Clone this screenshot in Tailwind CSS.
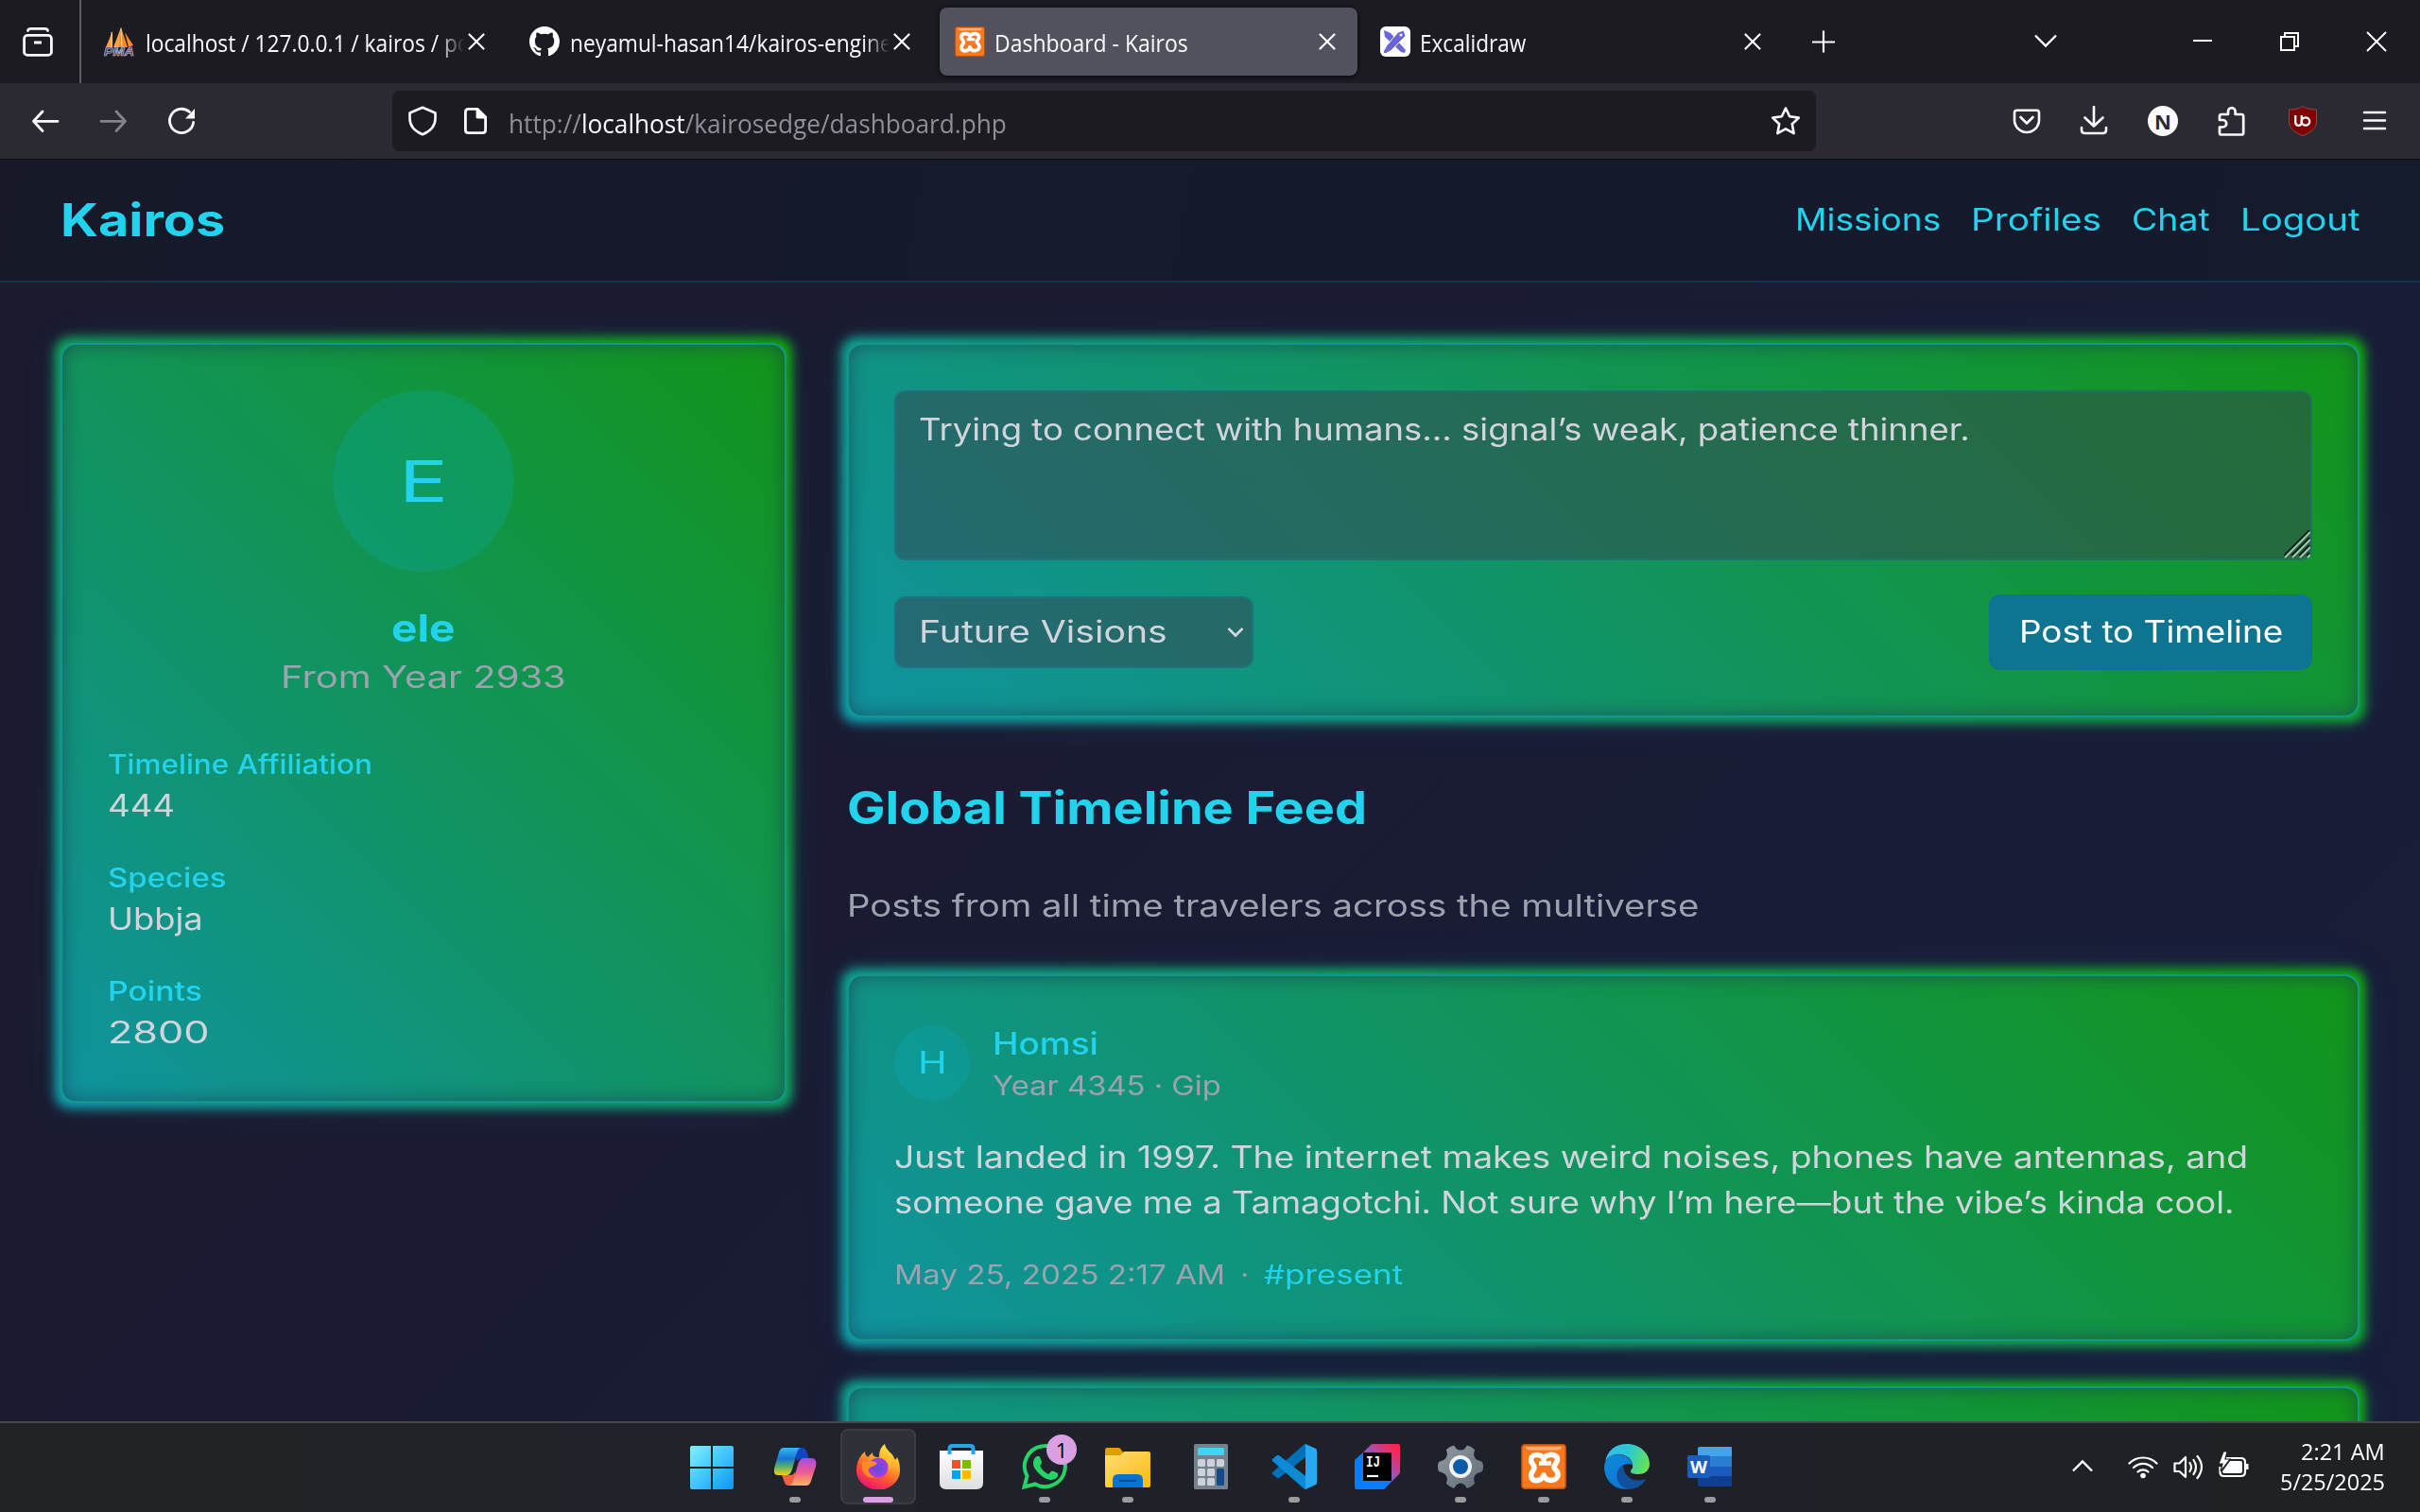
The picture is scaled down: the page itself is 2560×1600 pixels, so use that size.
<!DOCTYPE html>
<html lang="en">
<head>
<meta charset="utf-8">
<title>Dashboard - Kairos</title>
<script src="https://cdn.jsdelivr.net/npm/@tailwindcss/browser@4"></script>
</head>
<body class="w-[2560px] h-[1600px] overflow-hidden flex flex-col bg-[#1a1a2e] font-['Open_Sans','Noto_Sans',sans-serif]">

<svg class="hidden">
  <defs>
    <symbol id="xampp" viewBox="0 0 48 48">
      <rect x=".8" y=".8" width="46.4" height="46.4" rx="3" fill="#f87820" stroke="#b9500f" stroke-width="1.4"/>
      <path d="M5 3h38c0 2-3 3.500-6 3.500H11C8 6.500 5 5 5 3z" fill="#ffb27c"/>
      <path d="M24 16C22.500 10 10.500 9.500 10.500 17c0 3.500 3.500 5 3.500 8s-3.500 4.500-3.500 8.500C10.500 40.500 22 40.500 24 33c2 7.500 15 7 15-1 0-4-4-5-4-7.500s3.500-4.500 3.500-8C38.500 9.500 26 10 24 16z" fill="none" stroke="#fff" stroke-width="5.600" stroke-linejoin="round"/>
      <path d="M24 14v4.500M24 36v-5M19 20.500h13" stroke="#fff" stroke-width="4.500"/>
    </symbol>
    <symbol id="x" viewBox="0 0 18 18"><path d="M1.500 1.500l15 15M16.500 1.500l-15 15" stroke="#fbfbfe" stroke-width="2.200" fill="none" stroke-linecap="round"/></symbol>
  </defs>
</svg>

<!-- Tab strip -->
<div class="h-[88px] shrink-0 bg-[#1c1b22] flex items-center text-[#fbfbfe] text-[25px]">
  <div class="w-[86px] h-full border-r-2 border-[#5b5b63] flex items-center pl-6">
    <svg class="w-8 h-8" viewBox="0 0 32 32" fill="none" stroke="#fbfbfe" stroke-width="2.800"><rect x="1.600" y="9.400" width="28.800" height="21" rx="3.500"/><path d="M5.500 4.500Q6 2.400 8.500 2.400h15Q26 2.400 26.500 4.500" stroke-linecap="round"/><path d="M12 17h8" stroke-width="3"/></svg>
  </div>
  <div class="flex gap-2 pl-2">
    <div class="w-[442px] h-[72px] flex items-center px-4">
      <svg class="w-8 h-8 shrink-0" viewBox="0 0 32 32"><path d="M9 5l-7 17h7zM18 1L10 22h11z" fill="#f9a13a"/><path d="M18 1l-2 21h9zM22 6l9 14-5 2z" fill="#f58a1f"/><path d="M8 6v15M18 2l1 19" stroke="#fbd39a" stroke-width="1"/><text x="0" y="31" font-size="12.500" font-weight="700" font-style="italic" font-family="Liberation Sans" textLength="32" lengthAdjust="spacingAndGlyphs" fill="#34367a" stroke="#c9c9dc" stroke-width=".6">PMA</text></svg>
      <div class="ml-3 w-[337px] pt-1 shrink-0 overflow-hidden whitespace-nowrap mask-r-from-92%"><span class="fit" data-w="344">localhost / 127.0.0.1 / kairos / po</span></div>
      <svg class="w-[18px] h-[18px] ml-1 shrink-0"><use href="#x"/></svg>
    </div>
    <div class="w-[442px] h-[72px] flex items-center px-4">
      <svg class="w-8 h-8 shrink-0" viewBox="0 0 16 16" fill="#fff"><path d="M8 0C3.580 0 0 3.580 0 8c0 3.540 2.290 6.530 5.470 7.590.4.070.55-.17.55-.38 0-.19-.01-.82-.01-1.490-2.010.37-2.530-.49-2.690-.94-.09-.23-.48-.94-.82-1.130-.28-.15-.68-.52-.01-.53.63-.01 1.080.58 1.230.82.72 1.210 1.870.87 2.330.66.07-.52.28-.87.51-1.070-1.780-.2-3.640-.89-3.640-3.950 0-.87.31-1.590.82-2.150-.08-.2-.36-1.020.08-2.120 0 0 .67-.21 2.200.82.64-.18 1.320-.27 2-.27s1.360.09 2 .27c1.530-1.040 2.200-.82 2.200-.82.44 1.100.16 1.920.08 2.120.51.56.82 1.270.82 2.150 0 3.070-1.870 3.750-3.650 3.950.29.25.54.73.54 1.480 0 1.070-.01 1.930-.01 2.200 0 .21.15.46.55.38A8.010 8.010 0 0016 8c0-4.420-3.580-8-8-8z"/></svg>
      <div class="ml-[11px] w-[338px] pt-1 shrink-0 overflow-hidden whitespace-nowrap mask-r-from-92%"><span class="fit" data-w="348">neyamul-hasan14/kairos-engine-</span></div>
      <svg class="w-[18px] h-[18px] ml-1 shrink-0"><use href="#x"/></svg>
    </div>
    <div class="w-[442px] h-[72px] flex items-center px-4 rounded-lg bg-[#52525e] shadow-[0_1px_5px_rgba(0,0,0,0.8)]">
      <svg class="w-8 h-8 shrink-0"><use href="#xampp"/></svg>
      <div class="ml-[10px] w-[339px] pt-1 shrink-0 whitespace-nowrap"><span class="fit" data-w="205">Dashboard - Kairos</span></div>
      <svg class="w-[18px] h-[18px] ml-1 shrink-0"><use href="#x"/></svg>
    </div>
    <div class="w-[442px] h-[72px] flex items-center px-4">
      <svg class="w-8 h-8 shrink-0" viewBox="0 0 32 32"><rect width="32" height="32" rx="6" fill="#fff"/><path d="M4 4l7 3 16 18-1 3-4-1L5 11z" fill="#6965db"/><path d="M25 4l2 6L11 26l-6 3-2-2 4-7L19 6z" fill="#6965db" stroke="#fff" stroke-width="1"/><circle cx="22" cy="9" r="1.500" fill="#fff"/></svg>
      <div class="ml-[10px] w-[339px] pt-1 shrink-0 whitespace-nowrap"><span class="fit" data-w="112">Excalidraw</span></div>
      <svg class="w-[18px] h-[18px] ml-1 shrink-0"><use href="#x"/></svg>
    </div>
  </div>
  <svg class="w-6 h-6 ml-[31px]" viewBox="0 0 24 24" stroke="#fbfbfe" stroke-width="2.200"><path d="M12 .5v23M0 12.500h24"/></svg>
  <svg class="w-6 h-6 ml-[211px]" viewBox="0 0 24 24" fill="none" stroke="#fbfbfe" stroke-width="2.400"><path d="M1 5.500l11 11 11-11"/></svg>
  <svg class="w-5 h-6 ml-[144px]" viewBox="0 0 20 24" stroke="#fff" stroke-width="2"><path d="M0 11h20"/></svg>
  <svg class="w-5 h-5 ml-[72px]" viewBox="0 0 20 20" fill="none" stroke="#fff" stroke-width="2"><path d="M1 5h14v14H1z"/><path d="M5 5V1h14v14h-4"/></svg>
  <svg class="w-[22px] h-[22px] ml-[71px]" viewBox="0 0 22 22" stroke="#fff" stroke-width="1.900"><path d="M1 1l20 20M21 1L1 21"/></svg>
</div>

<!-- Toolbar -->
<div class="h-[81px] shrink-0 bg-[#2b2a33] border-b border-[#0c0c0d] flex items-center pl-8">
  <div class="flex gap-10">
    <svg class="w-8 h-8" viewBox="0 0 32 32" fill="none" stroke="#fbfbfe" stroke-width="2.800" stroke-linecap="round" stroke-linejoin="round"><path d="M13 6L3.500 16.300 13 26.500M4 16.300h25"/></svg>
    <svg class="w-8 h-8" viewBox="0 0 32 32" fill="none" stroke="#85848c" stroke-width="2.800" stroke-linecap="round" stroke-linejoin="round"><path d="M19 6l9.500 10.300L19 26.500M28 16.300H3"/></svg>
    <svg class="w-8 h-8" viewBox="0 0 32 32" fill="none" stroke="#fbfbfe" stroke-width="2.800"><path d="M28.600 17.500A12.600 12.600 0 1 1 24.500 6.500" stroke-linecap="round"/><path d="M30 3v10.500H20z" fill="#fbfbfe" stroke="none"/></svg>
  </div>
  <div class="ml-[207px] w-[1506px] h-16 rounded-lg bg-[#1c1b22] flex items-center justify-between px-4">
    <div class="flex items-center">
      <svg class="w-8 h-8" viewBox="0 0 32 32" fill="none" stroke="#fbfbfe" stroke-width="2.600" stroke-linejoin="round"><path d="M16 1.800L29.500 7.500v6C29.500 21 25 26.500 16 30.300 7 26.500 2.500 21 2.500 13.500v-6z"/></svg>
      <svg class="w-8 h-8 ml-6" viewBox="0 0 32 32" fill="none" stroke="#fbfbfe" stroke-width="2.800" stroke-linejoin="round"><path d="M18 3.400H8.500Q5.400 3.400 5.400 6.500v19Q5.400 28.600 8.500 28.600h15Q26.600 28.600 26.600 25.500V12z"/><path d="M18 3.400V12h8.600z" fill="#fbfbfe"/></svg>
      <div class="ml-[19px] text-[28px] leading-10 text-[#8f8f98] whitespace-nowrap pt-1"><span class="fit" data-w="527">http://<span class="text-[#fbfbfe]">localhost</span>/kairosedge/dashboard.php</span></div>
    </div>
    <svg class="w-8 h-8 shrink-0" viewBox="0 0 32 32" fill="none" stroke="#fbfbfe" stroke-width="2.600" stroke-linejoin="round"><path d="M16 2.500l4.200 8.800 9.600 1.300-7 6.700 1.800 9.800L16 24.400l-8.600 4.700 1.800-9.800-7-6.700 9.600-1.300z"/></svg>
  </div>
  <div class="ml-[207px] flex items-center">
    <svg class="w-8 h-8" viewBox="0 0 32 32" fill="none" stroke="#fbfbfe" stroke-width="2.600" stroke-linecap="round" stroke-linejoin="round"><path d="M5.500 4.800h21Q29 4.800 29 7.300V15a13 13 0 0 1-26 0V7.300Q3 4.800 5.500 4.800z"/><path d="M9.500 12l6.500 6.500 6.500-6.500"/></svg>
    <svg class="w-8 h-8 ml-[39px]" viewBox="0 0 32 32" fill="none" stroke="#fbfbfe" stroke-width="2.600" stroke-linecap="round" stroke-linejoin="round"><path d="M16 1v20M6.500 12.500L16 21.500l9.500-9M3 23v2.500Q3 29 6.500 29h19Q29 29 29 25.500V23"/></svg>
    <div class="w-8 h-8 ml-[41px] rounded-full bg-[#fbfbfe] flex items-center justify-center text-[22px] font-bold text-[#2b2a33] leading-none">N</div>
    <svg class="w-8 h-8 ml-[40px]" viewBox="0 0 32 32" fill="none" stroke="#fbfbfe" stroke-width="2.700" stroke-linejoin="round"><path d="M6 30.500Q4 30.500 4 28.500v-6h3.500a3.700 3.700 0 0 0 0-7.500H4V11Q4 9 6 9h7V6a3.800 3.800 0 0 1 7.600 0v3h6.500Q29.200 9 29.200 11v17.500q0 2-2 2z"/></svg>
    <div class="w-8 h-8 ml-11 relative flex items-center justify-center">
      <svg class="absolute inset-0" viewBox="0 0 32 32"><path d="M16 .5C20 3 25 4 30.500 4v13C30.500 24 24 28.500 16 31.700 8 28.500 1.500 24 1.500 17V4C7 4 12 3 16 .5z" fill="#800000" stroke="#8c5a5e" stroke-width=".8"/></svg>
      <svg class="relative w-5 h-5" viewBox="0 0 20 20" fill="none" stroke="#fff" stroke-width="2.300"><path d="M2.200 4v7.500a3.300 3.300 0 0 0 6.600 0V4"/><circle cx="13" cy="10.500" r="4.200"/></svg>
    </div>
    <svg class="w-8 h-8 ml-11" viewBox="0 0 32 32" stroke="#fbfbfe" stroke-width="2.500" stroke-linecap="round"><path d="M5 7h22M5 15.500h22M5 24h22"/></svg>
  </div>
</div>

<!-- Kairos page -->
<div class="flex-1 min-h-0 overflow-hidden flex flex-col bg-[linear-gradient(135deg,#1b1a2e_0%,#1a1b33_45%,#181e3a_100%)] font-[Inter,sans-serif] text-[32px] leading-[48px]">
  <nav class="h-[130px] shrink-0 px-16 border-b-2 border-[#11364a] bg-[linear-gradient(100deg,#171929_0%,#151a2c_40%,#141b2d_100%)] flex items-center justify-between text-[#22d3ee]">
    <div class="text-[48px] leading-[64px] font-bold"><span class="fit" data-w="174">Kairos</span></div>
    <div class="flex gap-8 whitespace-nowrap">
      <a><span class="fit" data-w="154">Missions</span></a>
      <a><span class="fit" data-w="138">Profiles</span></a>
      <a><span class="fit" data-w="83">Chat</span></a>
      <a><span class="fit" data-w="126">Logout</span></a>
    </div>
  </nav>

  <main class="p-16 grid grid-cols-[768px_1600px] gap-16 items-start">
    <aside class="relative isolate p-12 rounded-2xl border-2 border-[#12958a] shadow-[0_0_48px_rgba(34,211,238,0.1)]">
      <div class="absolute -inset-[8px] -z-10 rounded-2xl blur-[6px] bg-[linear-gradient(45deg,#0fa5b5,#0fae12)]"></div>
      <div class="absolute -inset-0.5 -z-10 rounded-2xl border-2 border-[#12958a] bg-[linear-gradient(45deg,#10939f,#129519)] shadow-[inset_0_0_20px_rgba(30,50,75,0.6)]"></div>
      <div class="flex flex-col items-center">
        <div class="w-48 h-48 rounded-full bg-[#06b6d4]/20 flex items-center justify-center text-[60px] leading-none text-[#22d3ee]"><span class="fit" data-w="52">E</span></div>
        <div class="mt-8 text-[40px] leading-[56px] font-bold text-[#22d3ee]"><span class="fit" data-w="68">ele</span></div>
        <div class="text-[#9ca3af]"><span class="fit" data-w="302">From Year 2933</span></div>
      </div>
      <dl class="mt-12 flex flex-col gap-8 text-[#d1d5db]">
        <div><dt class="text-[28px] leading-10 font-medium text-[#22d3ee]"><span class="fit" data-w="280">Timeline Affiliation</span></dt><dd><span class="fit" data-w="71">444</span></dd></div>
        <div><dt class="text-[28px] leading-10 font-medium text-[#22d3ee]"><span class="fit" data-w="126">Species</span></dt><dd><span class="fit" data-w="101">Ubbja</span></dd></div>
        <div><dt class="text-[28px] leading-10 font-medium text-[#22d3ee]"><span class="fit" data-w="100">Points</span></dt><dd><span class="fit" data-w="108">2800</span></dd></div>
      </dl>
    </aside>

    <section>
      <div class="relative isolate p-12 rounded-2xl border-2 border-[#12958a] shadow-[0_0_48px_rgba(34,211,238,0.1)]">
        <div class="absolute -inset-[8px] -z-10 rounded-2xl blur-[6px] bg-[linear-gradient(45deg,#0fa5b5,#0fae12)]"></div>
        <div class="absolute -inset-0.5 -z-10 rounded-2xl border-2 border-[#12958a] bg-[linear-gradient(45deg,#10939f,#129519)] shadow-[inset_0_0_20px_rgba(30,50,75,0.6)]"></div>
        <div class="relative h-[180px] rounded-xl border-2 border-[#0891b2]/25 bg-[#374151]/50 px-6 py-4 text-[#d1d5db]">
          <span class="fit" data-w="1112">Trying to connect with humans... signal’s weak, patience thinner.</span>
          <svg class="absolute right-0 bottom-0 w-7 h-[30px]" viewBox="0 0 28 30" stroke-width="1.900"><path d="M0 27L27 0M8 27L27 8M16 27L27 16M24 27l3-3" stroke="#0b1f17"/><path d="M1 29L28 2M9 29L28 10M17 29L28 18M25 29l3-3" stroke="#a9c3b4"/></svg>
        </div>
        <div class="mt-9 flex items-center justify-between">
          <div class="w-[380px] h-[76px] rounded-xl border-2 border-[#0891b2]/25 bg-[#374151]/50 pl-6 pr-2 flex items-center justify-between text-[#d1d5db]">
            <span class="fit" data-w="263">Future Visions</span>
            <svg class="w-[18px] h-[12px]" viewBox="0 0 18 12" fill="none" stroke="#d1d5db" stroke-width="2.800"><path d="M1.500 2l7.500 7.500L16.500 2"/></svg>
          </div>
          <div class="w-[342px] h-20 rounded-xl bg-[#0e7490] px-8 flex items-center text-white whitespace-nowrap"><span class="fit" data-w="279">Post to Timeline</span></div>
        </div>
      </div>

      <h2 class="mt-16 text-[48px] leading-[64px] font-bold text-[#22d3ee]"><span class="fit" data-w="550">Global Timeline Feed</span></h2>
      <p class="mt-12 text-[#9ca3af]"><span class="fit" data-w="902">Posts from all time travelers across the multiverse</span></p>

      <article class="relative isolate mt-12 p-12 rounded-2xl border-2 border-[#12958a] shadow-[0_0_48px_rgba(34,211,238,0.1)]">
        <div class="absolute -inset-[8px] -z-10 rounded-2xl blur-[6px] bg-[linear-gradient(45deg,#0fa5b5,#0fae12)]"></div>
        <div class="absolute -inset-0.5 -z-10 rounded-2xl border-2 border-[#12958a] bg-[linear-gradient(45deg,#10939f,#129519)] shadow-[inset_0_0_20px_rgba(30,50,75,0.6)]"></div>
        <div class="flex items-center gap-6">
          <div class="w-20 h-20 rounded-full bg-[#06b6d4]/20 flex items-center justify-center text-[#22d3ee]"><span class="fit" data-w="31">H</span></div>
          <div>
            <div class="font-medium text-[#22d3ee]"><span class="fit" data-w="112">Homsi</span></div>
            <div class="text-[28px] leading-10 text-[#9ca3af]"><span class="fit" data-w="242">Year 4345 · Gip</span></div>
          </div>
        </div>
        <div class="mt-8 text-[#d1d5db] whitespace-nowrap">
          <div><span class="fit" data-w="1432">Just landed in 1997. The internet makes weird noises, phones have antennas, and</span></div>
          <div><span class="fit" data-w="1418">someone gave me a Tamagotchi. Not sure why I’m here—but the vibe’s kinda cool.</span></div>
        </div>
        <div class="mt-8 text-[28px] leading-10 text-[#9ca3af] flex">
          <span class="fit" data-w="350">May 25, 2025 2:17 AM</span><span class="w-[41px] text-center">·</span><span class="text-[#22d3ee]"><span class="fit" data-w="147">#present</span></span>
        </div>
      </article>

      <article class="relative isolate mt-12 h-[388px] rounded-2xl border-2 border-[#12958a] shadow-[0_0_48px_rgba(34,211,238,0.1)]">
        <div class="absolute -inset-[8px] -z-10 rounded-2xl blur-[6px] bg-[linear-gradient(45deg,#0fa5b5,#0fae12)]"></div>
        <div class="absolute -inset-0.5 -z-10 rounded-2xl border-2 border-[#12958a] bg-[linear-gradient(45deg,#10939f,#129519)] shadow-[inset_0_0_20px_rgba(30,50,75,0.6)]"></div>
      </article>
    </section>
  </main>
</div>

<!-- Taskbar -->
<div class="relative h-24 shrink-0 border-t-2 border-[#46474b] bg-[linear-gradient(90deg,#212224_0%,#1f2229_30%,#1e2129_60%,#202124_100%)] flex items-start pl-[709px] pt-1.5 text-white">
  <div class="flex">
    <div class="w-[88px] flex flex-col items-center pt-4"><svg class="w-12 h-12" viewBox="0 0 48 48"><defs><linearGradient id="w" x1="0" y1="0" x2="1" y2="1" ><stop offset="0" stop-color="#7df3fd"/><stop offset="1" stop-color="#0a96f8"/></linearGradient></defs><path d="M3 2h20v22H1V4q0-2 2-2zM25 2h20q2 0 2 2v20H25zM1 26h22v22H3q-2 0-2-2zM25 26h22v20q0 2-2 2H25z" fill="url(#w)"/></svg></div>
    <div class="w-[88px] flex flex-col items-center pt-4"><svg class="w-12 h-12" viewBox="0 0 48 48"><defs><linearGradient id="c1" x1="0" y1="0" x2="0" y2="1"><stop offset="0" stop-color="#35b8f5"/><stop offset=".4" stop-color="#1675d6"/><stop offset=".65" stop-color="#4bab72"/><stop offset="1" stop-color="#f3cf17"/></linearGradient><linearGradient id="c2" x1="0" y1="0" x2="0" y2="1"><stop offset="0" stop-color="#a94bea"/><stop offset=".5" stop-color="#ec5a91"/><stop offset="1" stop-color="#ffb45a"/></linearGradient></defs><path d="M24 4h8q3 0 4 3l3 9h-9q-3 0-4 3z" fill="#1245c0"/><path d="M24 44h-7q-3 0-4-3l-3-8h9q4 0 5-4z" fill="#f4603f"/><path d="M12 4h18q-3 1-4 5l-5 18q-2 6-6 6H6q-6 0-3.500-9L7 9q1.500-5 5-5z" fill="url(#c1)"/><path d="M36 44H18q3-1 4-5l5-17q2-7 6-7h8q7 0 5 9l-5 15q-1.500 5-5 5z" fill="url(#c2)"/></svg><div class="w-3 h-1.5 mt-2 rounded-full bg-[#9b9b9e]"></div></div>
    <div class="w-[88px] flex justify-center"><div class="w-20 h-20 rounded-lg bg-white/7 border-2 border-white/6 flex flex-col items-center pt-3.5"><svg class="w-12 h-12 shrink-0" viewBox="0 0 48 48"><defs><linearGradient id="f" x1=".8" y1="0" x2=".3" y2="1"><stop offset="0" stop-color="#fff044"/><stop offset=".35" stop-color="#ffb02a"/><stop offset=".65" stop-color="#ff5a2e"/><stop offset="1" stop-color="#ec0f75"/></linearGradient><radialGradient id="fp"><stop offset="0" stop-color="#5f4ed8"/><stop offset="1" stop-color="#a63ae6"/></radialGradient></defs><path d="M31 0c1 7 8 9 10 15 1 3 1 2 3-1 3 6 3 11 3 15A23 20 0 0 1 1 28C1 20 4 13 10 8c0 3 1 4 3 6l5-5c0 4 2 5 7 5 0-7 2-11 6-14z" fill="url(#f)"/><circle cx="24" cy="25" r="10.500" fill="url(#fp)"/><path d="M7 20c5-2 9-3 16 0-2 4-6 3-9 6-2 3 2 9 8 9-9 3-16-3-15-15z" fill="#ff8a26"/><path d="M25 14c8 0 13 7 10 14 5-7 3-14-3-18z" fill="#ffbf2e"/></svg><div class="w-8 h-1.5 mt-2 rounded-full bg-[#dba0e4]"></div></div></div>
    <div class="w-[88px] flex flex-col items-center pt-4"><svg class="w-12 h-12" viewBox="0 0 48 48"><defs><linearGradient id="s" x1="0" y1="0" x2="0" y2="1"><stop offset="0" stop-color="#fff"/><stop offset="1" stop-color="#dedee0"/></linearGradient></defs><path d="M1 7h46v34q0 7-7 7H8q-7 0-7-7z" fill="url(#s)"/><path d="M11.500 11V5q0-3 3-3h19q3 0 3 3v6" fill="none" stroke="#22a7ea" stroke-width="4"/><path d="M14 17h9v9h-9z" fill="#f25022"/><path d="M25 17h9v9h-9z" fill="#7fba00"/><path d="M14 28h9v9h-9z" fill="#00a4ef"/><path d="M25 28h9v9h-9z" fill="#ffb900"/></svg></div>
    <div class="w-[88px] relative flex flex-col items-center pt-4"><svg class="w-12 h-12" viewBox="0 0 48 48"><path d="M2.500 45.500L5.500 34A21.500 21.500 0 1 1 14 42.500z" fill="none" stroke="#25d366" stroke-width="4"/><path d="M16 13q2-1 3 1l2 5q0 2-2 4 3 6 9 9l3-3q1-1 3 0l4 2q1 4-3 6-6 3-14-3-10-8-9-15 1-5 4-6z" fill="#25d366"/></svg><div class="w-3 h-1.5 mt-2 rounded-full bg-[#9b9b9e]"></div><div class="absolute left-[46px] top-1.5 w-8 h-8 rounded-full bg-[#dba0e4] text-black text-[22px] leading-8 text-center">1</div></div>
    <div class="w-[88px] flex flex-col items-center pt-4"><svg class="w-12 h-12" viewBox="0 0 48 48"><defs><linearGradient id="e" x1="0" y1="0" x2="1" y2="1"><stop offset="0" stop-color="#ffdf75"/><stop offset="1" stop-color="#fbb90d"/></linearGradient></defs><path d="M0 6q0-2 2-2h12q2 0 3 2l4 6-4 5H0z" fill="#e0a000"/><path d="M0 12h16l4-4h26q2 0 2 2v34q0 2-2 2H2q-2 0-2-2z" fill="url(#e)"/><path d="M8 46V38q0-6 6-6h20q6 0 6 6v8z" fill="#0a72cc"/><path d="M15 39h18" stroke="#054b94" stroke-width="2"/></svg><div class="w-3 h-1.5 mt-2 rounded-full bg-[#9b9b9e]"></div></div>
    <div class="w-[88px] flex flex-col items-center pt-4"><svg class="w-12 h-12" viewBox="0 0 48 48"><rect x="6" width="36" height="48" rx="1.500" fill="#77818b"/><rect x="10" y="4" width="28" height="8" rx="1.500" fill="#41d5f5"/><g fill="#cbd2da"><rect x="10" y="16" width="8" height="8" rx="1.500"/><rect x="20" y="16" width="8" height="8" rx="1.500"/><rect x="30" y="16" width="8" height="8" rx="1.500"/><rect x="10" y="26" width="8" height="8" rx="1.500"/><rect x="20" y="26" width="8" height="8" rx="1.500"/><rect x="10" y="36" width="8" height="8" rx="1.500"/><rect x="20" y="36" width="8" height="8" rx="1.500"/></g><rect x="30" y="26" width="8" height="18" rx="1.500" fill="#144a8c"/></svg></div>
    <div class="w-[88px] flex flex-col items-center pt-4"><svg class="w-12 h-12" viewBox="0 0 48 48"><path d="M1 32l5 4q1 .6 2 0L36 14V0q-1 0-2 1L1 30q-1 1 0 2z" fill="#0070b8"/><path d="M1 16l5-4q1-.6 2 0L36 34v14q-1 0-2-1L1 18q-1-1 0-2z" fill="#0d8ad6"/><path d="M36 0l11 5q1 .6 1 2v34q0 1.400-1 2l-11 5z" fill="#27a8f2"/></svg><div class="w-3 h-1.5 mt-2 rounded-full bg-[#9b9b9e]"></div></div>
    <div class="w-[88px] flex flex-col items-center pt-4"><svg class="w-12 h-12" viewBox="0 0 48 48"><defs><linearGradient id="ij" x1=".9" y1=".1" x2=".3" y2=".8"><stop offset="0" stop-color="#ff2450"/><stop offset=".55" stop-color="#9a55b5"/><stop offset="1" stop-color="#087cfa"/></linearGradient></defs><path d="M8 10L17 1q1-1 2-1h27q2 0 2 2v28q0 1-1 2L31 48 20 40z" fill="url(#ij)"/><path d="M0 18q0-1 1-2L9 9v30h30L31 48H2q-2 0-2-2z" fill="#087cfa"/><path d="M9 9h30v30H9z"/><text x="12" y="24" font-size="16" font-weight="700" font-family="Liberation Mono" textLength="15" lengthAdjust="spacingAndGlyphs" fill="#fff">IJ</text><path d="M13 34h12" stroke="#fff" stroke-width="2.200"/></svg></div>
    <div class="w-[88px] flex flex-col items-center pt-4"><svg class="w-12 h-12" viewBox="0 0 48 48"><defs><linearGradient id="g" x1="0" y1="0" x2="1" y2="1"><stop offset="0" stop-color="#939ba3"/><stop offset="1" stop-color="#5f6b77"/></linearGradient></defs><path d="M17 1.500l3 4q4 2 8 0l3-4q4 .5 8 4.500l-1 5q1 5 4 6l5 2q2 5 0 10l-5 2q-3 1-4 6l1 5q-4 4-8 5l-3-4q-4-3-8 0l-3 4q-4-1-8-5l1-5q-1-5-4-6l-5-2q-2-5 0-10l5-2q3-1 4-6L9 6q4-4 8-4.500z" fill="url(#g)"/><circle cx="24" cy="24" r="10" fill="#0c5cab" stroke="#f2f2f2" stroke-width="4"/></svg><div class="w-3 h-1.5 mt-2 rounded-full bg-[#9b9b9e]"></div></div>
    <div class="w-[88px] flex flex-col items-center pt-4"><svg class="w-12 h-12"><use href="#xampp"/></svg><div class="w-3 h-1.5 mt-2 rounded-full bg-[#9b9b9e]"></div></div>
    <div class="w-[88px] flex flex-col items-center pt-4"><svg class="w-12 h-12" viewBox="0 0 48 48"><defs><linearGradient id="e1" x1="0" y1=".3" x2="1" y2=".6"><stop offset="0" stop-color="#35b9f4"/><stop offset=".5" stop-color="#2fc9cd"/><stop offset="1" stop-color="#68e34e"/></linearGradient><linearGradient id="e2" x1="0" y1="0" x2=".5" y2="1"><stop offset="0" stop-color="#1389da"/><stop offset="1" stop-color="#0a76d2"/></linearGradient></defs><path d="M1 19C3 7 12 0 24 0c14 0 24 10 24 21 0 8-6 11-12 11-5 0-8-1-8-3s3-3 2-7C29 14 20 10 13 11 6 12 2 16 1 19z" fill="url(#e1)"/><path d="M0 24C1 15 7 11 14 11c8 0 15 5 16 11-10-4-18 6-15 14 2 6 7 10 14 11C12 51 0 39 0 24z" fill="url(#e2)"/><path d="M20 22c-8 5-9 17-1 23 9 6 21 1 25-8-12 5-24-2-24-15z" fill="#11509c"/></svg><div class="w-3 h-1.5 mt-2 rounded-full bg-[#9b9b9e]"></div></div>
    <div class="w-[88px] flex flex-col items-center pt-4"><svg class="w-12 h-12" viewBox="0 0 48 48"><path d="M11 5q0-2 2-2h33q1 0 1 1v9H11z" fill="#41a5ee"/><path d="M11 13h36v11H11z" fill="#2b7cd3"/><path d="M11 24h36v10H11z" fill="#185abd"/><path d="M11 34h36v10q0 1-1 1H13q-2 0-2-2z" fill="#103f91"/><rect y="12" width="24" height="24" rx="2" fill="#1b5cc0"/><text x="3" y="30.500" font-size="17" font-weight="700" font-family="Open Sans" textLength="18" lengthAdjust="spacingAndGlyphs" fill="#fff">W</text></svg><div class="w-3 h-1.5 mt-2 rounded-full bg-[#9b9b9e]"></div></div>
  </div>
  <div class="flex ml-[338px] pt-6">
    <svg class="w-6 h-8" viewBox="0 0 24 32" fill="none" stroke="#fff" stroke-width="2.400"><path d="M2 20.500L12 10.500l10 10"/></svg>
    <svg class="w-8 h-8 ml-9" viewBox="0 0 32 32" fill="none" stroke="#fff" stroke-width="2.200" stroke-linecap="round"><path d="M1.500 12.500a20.500 20.500 0 0 1 29 0M6 17a14 14 0 0 1 20 0M10.500 21.500a8 8 0 0 1 11 0"/><circle cx="16" cy="25.500" r="2.800" fill="#fff" stroke="none"/></svg>
    <svg class="w-8 h-8 ml-4" viewBox="0 0 32 32" fill="none" stroke="#fff" stroke-width="2.200" stroke-linecap="round" stroke-linejoin="round"><path d="M1.500 12.500h5L13 6v21l-6.500-6h-5zM17.500 12q3 4.500 0 9M21.500 9q5 7.500 0 15M25.500 5q9 11 0 23"/></svg>
    <svg class="w-8 h-8 ml-4" viewBox="0 0 32 32"><path d="M8 7h15.500Q28 7 28 11v10.500Q28 26 23.500 26h-18Q1.500 26 1.500 22v-6" fill="none" stroke="#fff" stroke-width="2.200"/><path d="M12 10h11q2 0 2 2v9q0 2-2 2H6q-2 0-2-2z" fill="#fff"/><path d="M28 13h3.500v6H28z" fill="#fff"/><path d="M5 0L0 13h4L2 21 12 8H7l2-8z" fill="#fff" stroke="#202226" stroke-width="1.200"/></svg>
  </div>
  <div class="ml-8 pt-2 w-[112px] flex flex-col items-end text-[23px] leading-8 whitespace-nowrap"><span class="fit" data-w="89">2:21 AM</span><span class="fit" data-w="111">5/25/2025</span></div>
</div>

<script>
  // Stretch each label horizontally to its design width, again whenever its own size changes
  function fit(el) {
    var natural = el.offsetWidth;
    if (!natural) return;
    var target = parseFloat(el.dataset.w);
    el.style.transform = 'scaleX(' + target / natural + ')';
    el.style.marginRight = (target - natural) + 'px';
  }
  var observer = new ResizeObserver(function (entries) {
    entries.forEach(function (entry) { fit(entry.target); });
  });
  document.querySelectorAll('.fit').forEach(function (el) {
    el.style.display = 'inline-block';
    el.style.whiteSpace = 'nowrap';
    el.style.flexShrink = '0';
    el.style.transformOrigin = 'left';
    fit(el);
    observer.observe(el);
  });
  window.addEventListener('load', function () {
    document.querySelectorAll('.fit').forEach(fit);
  });
</script>
</body>
</html>
